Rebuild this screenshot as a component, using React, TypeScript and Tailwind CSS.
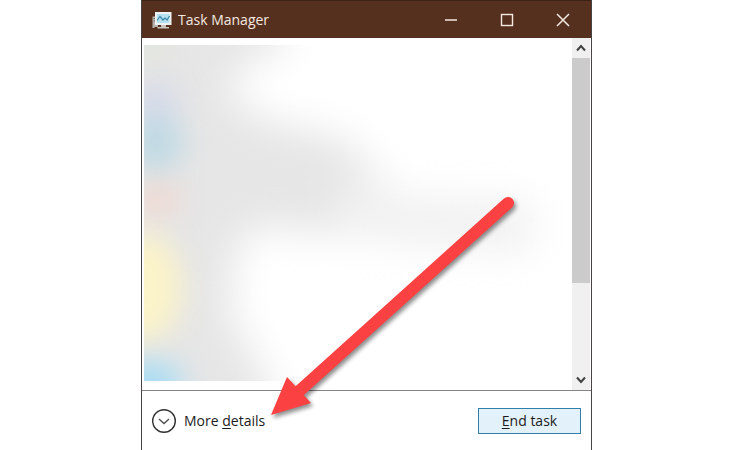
import React from "react";

const TaskManagerIcon = () => (
  <svg viewBox="0 0 20 18" className="h-[18px] w-5" aria-hidden="true">
    <path d="M0.500 5.500H6V16H2.500V17H0.500Z" fill="#b9b3ad" />
    <path d="M1.500 7.500H4M1.500 10H4" stroke="#6f6862" />
    <path d="M9 13h5v3h3v1.500H5.500V16H9Z" fill="#c9c6c2" />
    <rect x="3" y="1" width="16.500" height="13" fill="#eef2f3" />
    <rect x="5" y="3" width="12.500" height="9" fill="#b4e0f2" />
    <path
      d="M5 9.500 8 5.500 11 9 13 7 15 9 17.500 5"
      fill="none"
      stroke="#3c88a6"
      strokeWidth="1.200"
    />
  </svg>
);

const BlurredApps = () => (
  <svg
    viewBox="0 0 428 336"
    preserveAspectRatio="none"
    className="h-full w-full"
    aria-hidden="true"
  >
    <defs>
      <filter
        id="soft"
        x="-50%"
        y="-50%"
        width="200%"
        height="200%"
        colorInterpolationFilters="sRGB"
      >
        <feGaussianBlur stdDeviation="19" />
      </filter>
      <filter
        id="spot"
        x="-100%"
        y="-100%"
        width="300%"
        height="300%"
        colorInterpolationFilters="sRGB"
      >
        <feGaussianBlur stdDeviation="14" />
      </filter>
    </defs>
    <g filter="url(#soft)">
      <path
        d="M-60-60H142V0L120 10 92 24 88 56 130 78 200 94 240 136 256 176 200 192 120 180 92 200 86 270 126 340V400H-60Z"
        fill="#e6e6e6"
      />
      <path d="M200 130 270 152 390 156V208L270 200 190 190Z" fill="#f1f1f1" />
    </g>
    <g filter="url(#spot)">
      <ellipse cx="6" cy="2" rx="16" ry="12" fill="#e0e6d8" />
      <ellipse cx="12" cy="58" rx="24" ry="22" fill="#d6daE8" />
      <ellipse cx="12" cy="98" rx="28" ry="28" fill="#bfd9e4" />
      <ellipse cx="14" cy="154" rx="24" ry="16" fill="#f0d8d0" />
      <ellipse cx="0" cy="242" rx="38" ry="54" fill="#fbf3c8" />
      <ellipse cx="4" cy="338" rx="36" ry="22" fill="#a8dcf3" />
    </g>
  </svg>
);

const Arrow = () => (
  <svg
    viewBox="0 0 260 240"
    className="pointer-events-none absolute bottom-[20px] left-[120px] h-[240px] w-[260px] drop-shadow-[2px_3px_2px_rgba(0,0,0,0.45)]"
    aria-hidden="true"
  >
    <path d="M34 204 246 13" stroke="#fb4141" strokeWidth="12" strokeLinecap="round" />
    <path d="M9 225 25 187 49 213Z" fill="#fb4141" />
  </svg>
);

const TitleBar = () => (
  <header className="flex h-[38px] shrink-0 items-center border-t border-[#3c2415] bg-[#55301f] pl-[10px] text-[#f6e9e0]">
    <TaskManagerIcon />
    <h1 className="ml-[6px] flex-1 text-sm">Task Manager</h1>
    <button aria-label="Minimize" className="flex h-full w-14 items-center justify-center">
      <svg viewBox="0 0 14 14" className="size-[14px]">
        <path d="M1 7h12" stroke="currentColor" strokeWidth="1.500" />
      </svg>
    </button>
    <button aria-label="Maximize" className="flex h-full w-14 items-center justify-center">
      <svg viewBox="0 0 14 14" className="size-[14px]">
        <rect x="1.500" y="1.500" width="11" height="11" fill="none" stroke="currentColor" strokeWidth="1.400" />
      </svg>
    </button>
    <button aria-label="Close" className="flex h-full w-14 items-center justify-center">
      <svg viewBox="0 0 14 14" className="size-[14px]">
        <path d="M1 1 13 13M13 1 1 13" stroke="currentColor" strokeWidth="1.500" />
      </svg>
    </button>
  </header>
);

const ScrollBar = () => (
  <div className="flex w-[18px] flex-col bg-[#f0f0f0]">
    <button aria-label="Scroll up" className="flex h-5 items-center justify-center">
      <svg viewBox="0 0 10 8" className="h-2 w-[10px]">
        <path d="M1 6.500 5 2 9 6.500" fill="none" stroke="#404040" strokeWidth="2" />
      </svg>
    </button>
    <div className="flex-1">
      <div className="h-[72%] bg-[#cbcbcb]" />
    </div>
    <button aria-label="Scroll down" className="flex h-5 items-center justify-center">
      <svg viewBox="0 0 10 8" className="h-2 w-[10px]">
        <path d="M1 1.500 5 6 9 1.500" fill="none" stroke="#404040" strokeWidth="2" />
      </svg>
    </button>
  </div>
);

const App = () => {
  return (
    <div className="flex min-h-screen justify-center bg-white pr-[17px] font-['Open_Sans','Noto_Sans',sans-serif] text-sm text-[#1c1c1c]">
      <main className="relative flex w-full max-w-[451px] flex-col border-x border-[#484444] bg-white">
        <TitleBar />
        <section className="flex flex-1 gap-px border-b border-[#858585] pr-px pl-[2px]">
          <div className="relative mt-[7px] mb-[9px] flex-1 overflow-hidden">
            <div className="absolute inset-0">
              <BlurredApps />
            </div>
          </div>
          <ScrollBar />
        </section>
        <footer className="flex h-[59px] shrink-0 items-center justify-between pr-[10px] pl-[9px]">
          <button className="flex items-center gap-[7px]">
            <svg viewBox="0 0 26 26" className="size-[26px]" aria-hidden="true">
              <circle cx="13" cy="13" r="11.300" fill="none" stroke="#303030" strokeWidth="1.400" />
              <path d="M8 11 13 15.500 18 11" fill="none" stroke="#505050" strokeWidth="1.400" />
            </svg>
            <span>
              More <span className="underline underline-offset-2">d</span>etails
            </span>
          </button>
          <button className="h-[26px] w-[103px] border border-[#2f7fa8] bg-[#e3f1fb]">
            <span className="underline underline-offset-2">E</span>nd task
          </button>
        </footer>
        <Arrow />
      </main>
    </div>
  );
};

export default App;
